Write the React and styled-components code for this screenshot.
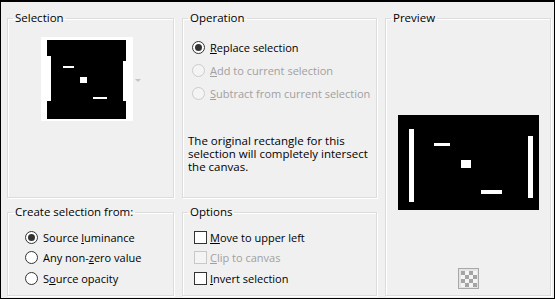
import React from 'react';
import styled, { createGlobalStyle } from 'styled-components';

const GlobalStyle = createGlobalStyle`
  html, body { margin: 0; padding: 0; background: #f0f0f0; }
  body { font-family: "Open Sans", "Noto Sans", sans-serif; font-size: 11px; color: #000; }
`;

const Window = styled.div`
  box-sizing: border-box;
  width: 555px;
  height: 299px;
  border: 1px solid #000;
  border-top-width: 2px;
  background: #f0f0f0;
  padding: 8px 2px 0 6px;
  display: grid;
  grid-template-columns: 167px 195px 166px;
  grid-template-rows: 188px 92px;
  column-gap: 8px;
  row-gap: 6px;
`;

const Group = styled.fieldset`
  margin: 0;
  padding: 0;
  min-width: 0;
  border: 1px solid #dcdcdc;
  box-shadow: inset 1px 1px 0 #fff, 1px 1px 0 #fff;
  grid-row: ${(p) => p.$row || 'auto'};
  grid-column: ${(p) => p.$col || 'auto'};
`;

const Legend = styled.legend`
  margin-left: 5px;
  padding: 0 2px;
  line-height: 16px;
  font-size: 11.5px;
`;

const Body = styled.div`
  display: flex;
  flex-direction: column;
  align-items: ${(p) => p.$align || 'stretch'};
  padding: ${(p) => p.$pad || '0'};
  height: 100%;
  box-sizing: border-box;
`;

const ThumbRow = styled.div`
  display: flex;
  align-items: center;
  justify-content: center;
  gap: 2px;
  margin-top: 11px;
  margin-left: 1px;
`;

const Arrow = styled.span`
  width: 0;
  height: 0;
  border-left: 3px solid transparent;
  border-right: 3px solid transparent;
  border-top: 3px solid #c4c4c4;
  margin-top: 2px;
`;

const Row = styled.label`
  display: flex;
  align-items: center;
  height: ${(p) => p.$h || 23}px;
  gap: ${(p) => p.$gap || 5}px;
  color: ${(p) => (p.$disabled ? '#a0a0a0' : '#000')};
  font-size: 11px;
  white-space: nowrap;
`;

const Radio = styled.span`
  box-sizing: border-box;
  width: 13px;
  height: 13px;
  border-radius: 50%;
  border: 1px solid ${(p) => (p.$disabled ? '#cccccc' : '#333')};
  background: ${(p) => (p.$disabled ? '#f4f4f4' : '#fff')};
  display: flex;
  align-items: center;
  justify-content: center;
  flex: none;
  &::after {
    content: '';
    width: 7px;
    height: 7px;
    border-radius: 50%;
    background: ${(p) => (p.$checked ? '#333' : 'transparent')};
  }
`;

const Check = styled.span`
  box-sizing: border-box;
  width: 13px;
  height: 13px;
  border: 1px solid ${(p) => (p.$disabled ? '#c8c8c8' : '#333')};
  background: ${(p) => (p.$disabled ? '#f4f4f4' : '#fff')};
  flex: none;
`;

const Note = styled.p`
  margin: auto 0 0 -9px;
  padding: 0 0 24px 5px;
  font-size: 11.5px;
  line-height: 13px;
`;

const PreviewImage = styled.div`
  margin-top: 89px;
  line-height: 0;
`;

const Checker = styled.div`
  margin-top: 58px;
  line-height: 0;
`;

const Key = styled.u``;

const Thumbnail = () => (
  <svg width="92" height="84" viewBox="0 0 92 84">
    <rect width="92" height="84" fill="#fff" />
    <rect x="6" y="3" width="79" height="79" fill="#000" />
    <rect x="6" y="19" width="4" height="45" fill="#fff" />
    <rect x="82" y="24" width="3" height="40" fill="#fff" />
    <rect x="22" y="29" width="11" height="2" fill="#fff" />
    <rect x="39" y="40" width="7" height="6" fill="#fff" />
    <rect x="52" y="60" width="14" height="2" fill="#fff" />
  </svg>
);

const Preview = () => (
  <svg width="141" height="95" viewBox="0 0 141 95">
    <rect width="141" height="95" fill="#000" />
    <rect x="11" y="14" width="5" height="73" fill="#fff" />
    <rect x="130" y="21" width="5" height="62" fill="#fff" />
    <rect x="36" y="28" width="16" height="3" fill="#fff" />
    <rect x="63" y="45" width="10" height="8" fill="#fff" />
    <rect x="83" y="75" width="21" height="4" fill="#fff" />
  </svg>
);

const CheckerIcon = () => {
  const cells = [];
  for (let r = 0; r < 4; r++) {
    for (let c = 0; c < 4; c++) {
      if ((r + c) % 2 === 0) {
        cells.push(<rect key={`${r}-${c}`} x={3 + c * 4} y={3 + r * 4} width="4" height="4" fill="#a4a4a4" />);
      }
    }
  }
  return (
    <svg width="21" height="21" viewBox="0 0 21 21">
      <rect x="0.5" y="0.5" width="20" height="20" fill="#e4e4e4" stroke="#a8a8a8" />
      <rect x="3" y="3" width="16" height="16" fill="#f4f4f4" />
      {cells}
    </svg>
  );
};

export default function App() {
  return (
    <>
      <GlobalStyle />
      <Window>
        <Group $row="1" $col="1">
          <Legend>Selection</Legend>
          <Body>
            <ThumbRow>
              <Thumbnail />
              <Arrow />
            </ThumbRow>
          </Body>
        </Group>

        <Group $row="1" $col="2">
          <Legend>Operation</Legend>
          <Body $pad="10px 0 0 9px">
            <Row>
              <Radio $checked />
              <span><Key>R</Key>eplace selection</span>
            </Row>
            <Row $disabled>
              <Radio $disabled />
              <span><Key>A</Key>dd to current selection</span>
            </Row>
            <Row $disabled>
              <Radio $disabled />
              <span><Key>S</Key>ubtract from current selection</span>
            </Row>
            <Note>
              The original rectangle for this
              <br />
              selection will completely intersect
              <br />
              the canvas.
            </Note>
          </Body>
        </Group>

        <Group $row="1 / 3" $col="3">
          <Legend>Preview</Legend>
          <Body $align="center">
            <PreviewImage>
              <Preview />
            </PreviewImage>
            <Checker>
              <CheckerIcon />
            </Checker>
          </Body>
        </Group>

        <Group $row="2" $col="1">
          <Legend>Create selection from:</Legend>
          <Body $pad="7px 0 0 17px">
            <Row $h={20.5}>
              <Radio $checked />
              <span>Source <Key>l</Key>uminance</span>
            </Row>
            <Row $h={20.5}>
              <Radio />
              <span>Any non-<Key>z</Key>ero value</span>
            </Row>
            <Row $h={20.5}>
              <Radio />
              <span>S<Key>o</Key>urce opacity</span>
            </Row>
          </Body>
        </Group>

        <Group $row="2" $col="2">
          <Legend>Options</Legend>
          <Body $pad="7px 0 0 11px">
            <Row $h={20.5} $gap={3}>
              <Check />
              <span><Key>M</Key>ove to upper left</span>
            </Row>
            <Row $h={20.5} $gap={3} $disabled>
              <Check $disabled />
              <span><Key>C</Key>lip to canvas</span>
            </Row>
            <Row $h={20.5} $gap={3}>
              <Check />
              <span><Key>I</Key>nvert selection</span>
            </Row>
          </Body>
        </Group>
      </Window>
    </>
  );
}
